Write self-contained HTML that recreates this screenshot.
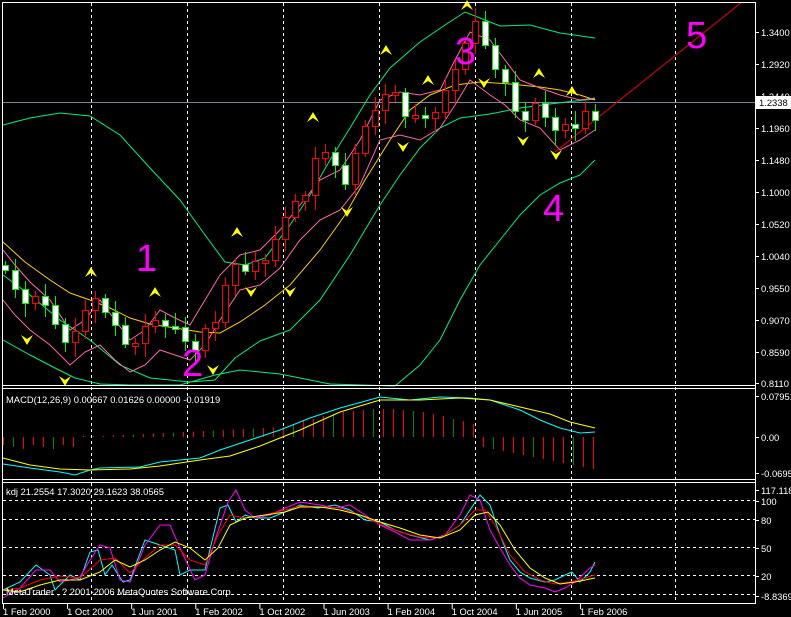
<!DOCTYPE html>
<html><head><meta charset="utf-8"><style>
html,body{margin:0;padding:0;background:#000;width:791px;height:617px;overflow:hidden}
svg{display:block}
text{font-family:"Liberation Sans",sans-serif;font-size:9.4px;fill:#fff}
.n{font-size:38px;fill:#ff00ff}
</style></head><body>
<svg id="s" width="791" height="617" xmlns="http://www.w3.org/2000/svg">
<rect width="791" height="617" fill="#000"/>
<g id="grid" stroke="#fff" stroke-dasharray="3,3" stroke-width="1">
<line x1="91.5" y1="3" x2="91.5" y2="603"/><line x1="187.5" y1="3" x2="187.5" y2="603"/>
<line x1="283.5" y1="3" x2="283.5" y2="603"/><line x1="379.5" y1="3" x2="379.5" y2="603"/>
<line x1="475.5" y1="3" x2="475.5" y2="603"/><line x1="571.5" y1="3" x2="571.5" y2="603"/>
<line x1="675.5" y1="3" x2="675.5" y2="603"/>
<line x1="3" y1="500.5" x2="755" y2="500.5"/><line x1="3" y1="519.5" x2="755" y2="519.5"/>
<line x1="3" y1="547.5" x2="755" y2="547.5"/><line x1="3" y1="575.5" x2="755" y2="575.5"/>
<line x1="3" y1="594.5" x2="755" y2="594.5"/>
</g>
<line x1="3" y1="102.5" x2="755" y2="102.5" stroke="#778899"/>
<g fill="none" stroke-width="1">
<polyline stroke="#00ee77" points="3,125 30,118 60,113 90,116 120,135 150,168 180,200 205,235 225,262 245,265 265,258 290,225 310,195 330,160 350,128 370,95 390,68 420,42 445,25 465,12 480,18 500,26 530,25 560,33 595,38"/>
<polyline stroke="#00ee77" points="3,340 30,355 55,368 75,378 100,384 130,385 180,385 215,375 240,370 280,374 330,384 395,386 420,365 440,340 460,300 480,265 500,240 520,215 540,195 560,183 580,175 595,160"/>
<polyline stroke="#00ee77" points="3,275 30,295 60,320 90,340 120,365 150,378 190,382 215,380 235,358 260,341 290,330 320,300 350,255 380,205 400,175 420,148 440,128 460,118 490,114 520,108 550,104 575,101 595,99"/>
<polyline stroke="#ffcc00" points="3,242 25,262 50,280 70,293 90,300 110,308 130,318 150,324 175,328 200,332 220,333 240,322 265,305 290,285 320,250 345,215 365,180 390,140 410,110 430,95 455,85 480,82 510,84 540,87 560,90 580,95 595,100"/>
<polyline stroke="#ff66aa" points="3,250 15,265 30,282 50,300 70,330 85,320 100,300 115,320 130,340 145,330 160,310 175,318 190,325 205,300 220,275 240,255 260,250 280,230 300,205 320,180 340,170 360,140 380,100 400,92 420,95 440,90 455,60 470,32 490,40 505,60 520,80 540,88 560,95 580,100 595,98"/>
<polyline stroke="#ff66aa" points="3,300 15,315 30,330 50,345 70,365 85,352 100,345 115,360 130,372 145,365 160,350 175,355 190,360 205,345 220,320 240,290 260,285 280,268 300,240 320,220 340,210 360,185 380,140 400,135 420,140 440,128 455,105 470,80 490,95 505,105 520,120 540,128 560,150 580,140 595,130"/>
<polyline stroke="#ee0000" points="555,152 742,2"/>
</g>
<g id="c"></g>
<g id="arr" fill="#ffff00"></g>
<g stroke="#fff" stroke-width="1" fill="none">
<line x1="2.5" y1="2" x2="2.5" y2="604"/>
<line x1="755.5" y1="2" x2="755.5" y2="604"/>
<line x1="2" y1="2.5" x2="756" y2="2.5"/>
<line x1="2" y1="385.5" x2="756" y2="385.5"/><line x1="2" y1="388.5" x2="756" y2="388.5"/>
<line x1="2" y1="479.5" x2="756" y2="479.5"/><line x1="2" y1="482.5" x2="756" y2="482.5"/>
<line x1="2" y1="603.5" x2="756" y2="603.5"/>
</g>
<g id="h" stroke-width="1"></g>
<g fill="none" stroke-width="1">
<polyline stroke="#00ffff" points="3,464 30,468 60,472 75,475 90,470 100,468 140,467 160,462 200,458 220,450 250,440 280,430 310,418 340,408 380,397 410,400 440,397 470,398 490,400 520,410 540,420 560,428 580,433 595,432"/>
<polyline stroke="#ffff00" points="3,458 30,465 60,469 90,470 130,469 160,466 200,460 230,456 260,446 300,430 340,412 380,400 420,400 460,398 490,400 520,407 550,414 570,422 595,428"/>
<polyline stroke="#00ffff" points="3,590 20,582 36,565 50,575 55,590 70,575 80,580 90,552 98,550 105,575 112,565 123,582 130,580 145,540 160,545 175,550 180,575 190,570 205,570 220,508 228,505 236,522 245,515 255,518 270,518 285,512 300,505 318,508 335,505 350,510 365,520 380,522 395,530 410,535 430,540 445,535 460,525 470,510 480,495 490,505 500,535 510,560 520,572 530,578 545,582 555,580 565,575 572,572 580,582 590,572 595,562"/>
<polyline stroke="#ff00ff" points="3,598 20,588 36,570 50,570 60,582 70,580 80,577 90,560 100,545 110,548 120,580 130,582 145,545 160,525 170,525 180,548 195,580 205,575 215,540 228,502 236,490 245,510 255,518 270,515 285,508 300,502 320,505 335,508 350,505 365,515 380,525 395,532 410,540 430,540 445,535 460,515 470,495 480,500 490,530 500,548 510,565 520,578 530,585 545,588 555,592 565,588 575,582 590,568 595,565"/>
<polyline stroke="#ff0000" points="3,590 20,588 40,580 60,576 80,578 100,560 115,558 130,573 145,558 160,545 175,545 190,560 205,565 218,535 230,515 245,518 265,515 285,510 300,506 320,507 340,508 360,515 380,524 400,532 420,537 440,538 460,525 475,510 485,510 495,525 510,555 525,572 540,580 555,584 570,582 585,578 595,575"/>
<polyline stroke="#ffff00" points="3,590 20,592 40,585 60,580 80,580 100,572 115,560 130,567 145,560 160,550 175,542 190,548 205,560 218,548 230,525 245,518 265,515 285,512 300,507 320,507 340,510 360,515 380,522 400,528 420,535 440,538 460,530 475,515 488,512 500,525 515,550 530,568 545,578 560,584 575,582 595,578"/>
</g>
<rect x="756" y="96" width="35" height="13" fill="#fff"/>
<text x="759" y="106" style="fill:#000">1.2338</text>
<g id="ax"></g>
<text x="6" y="403">MACD(12,26,9) 0.00667 0.01626 0.00000 -0.01919</text>
<text x="6" y="495">kdj 21.2554 17.3020 29.1623 38.0565</text>
<text x="6" y="595">MetaTrader , ? 2001-2006 MetaQuotes Software Corp.</text>
<text class="n" x="136" y="271">1</text>
<text class="n" x="182" y="376">2</text>
<text class="n" x="455" y="64">3</text>
<text class="n" x="543" y="221">4</text>
<text class="n" x="686" y="48">5</text>
</svg>
<script>
(function(){
var NS="http://www.w3.org/2000/svg";
function el(p,t,a){var e=document.createElementNS(NS,t);for(var k in a)e.setAttribute(k,a[k]);p.appendChild(e);return e;}
var ys=[275,290,300,300,305,320,345,330,305,300,310,330,345,340,330,320,322,330,340,345,330,320,290,265,268,265,260,235,220,200,190,160,150,170,185,150,130,110,90,95,115,110,120,110,95,70,40,25,45,65,85,110,115,105,115,135,125,125,115,120];
var g=document.getElementById("c");
var prev=265;
for(var i=0;i<ys.length;i++){
 var x=5+i*10, o=prev, c=ys[i]+((i*37)%11-5);
 var t0=Math.min(o,c), b0=Math.max(o,c); if(b0-t0<3){b0=t0+3;}
 var up=c<o; var col=up?"#ff0000":"#00ee00";
 el(g,"line",{x1:x+0.5,y1:t0-4-(i*7)%10,x2:x+0.5,y2:b0+4+(i*5)%12,stroke:col});
 el(g,"rect",{x:x-2.5,y:t0+0.5,width:6,height:b0-t0,fill:up?"#000":"#fff",stroke:col});
 prev=c;
}
var a=document.getElementById("arr");
[[91,272,1],[155,292,1],[237,232,1],[313,117,1],[386,50,1],[428,80,1],[467,5,1],[539,73,1],[572,91,1],[27,340,0],[65,381,0],[213,370,0],[251,292,0],[290,292,0],[347,212,0],[403,147,0],[484,83,0],[523,141,0],[556,155,0]].forEach(function(p){
 if(p[2]) el(a,"path",{d:"M"+(p[0]-6)+","+(p[1]+5)+" L"+p[0]+","+(p[1]-5)+" L"+(p[0]+6)+","+(p[1]+5)+" L"+p[0]+","+(p[1]+1)+"Z"});
 else el(a,"path",{d:"M"+(p[0]-6)+","+(p[1]-5)+" L"+p[0]+","+(p[1]+5)+" L"+(p[0]+6)+","+(p[1]-5)+" L"+p[0]+","+(p[1]-1)+"Z"});
});
var h=document.getElementById("h");
for(var i=0;i<60;i++){
 var x=3+i*10; if(x>595)break;
 var y1,y2;
 if(i<8){y1=437;y2=437+8+(i%3)*2;}
 else if(i<28){y1=437-Math.max(1,(i-8)*0.5);y2=437;}
 else if(i<48){var v=Math.round(10+18*Math.sin((i-28)/20*Math.PI));y1=437-v;y2=437;}
 else {y1=437;y2=437+10+(i-48)*2;}
 var col=(i%4==1)?"#008800":"#ff0000";
 el(h,"line",{x1:x+0.5,y1:y1,x2:x+0.5,y2:y2,stroke:col});
}
var ax=document.getElementById("ax");
[["1.3400",32],["1.2920",64],["1.2440",96],["1.1960",128],["1.1480",160],["1.1000",192],["1.0520",224],["1.0040",256],["0.9550",288],["0.9070",320],["0.8590",352],["0.8110",383],["0.07951",396],["0.00",437],["-0.0695",473],["117.118",490],["100",501],["80",520],["50",548],["20",576],["-8.8369",596]].forEach(function(p){
 el(ax,"line",{x1:755,y1:p[1]+0.5,x2:759,y2:p[1]+0.5,stroke:"#fff"});
 var t=el(ax,"text",{x:761,y:p[1]+4});t.textContent=p[0];
});
["1 Feb 2000","1 Oct 2000","1 Jun 2001","1 Feb 2002","1 Oct 2002","1 Jun 2003","1 Feb 2004","1 Oct 2004","1 Jun 2005","1 Feb 2006"].forEach(function(s,i){
 var x=3+i*64.1;
 el(ax,"line",{x1:x+0.5,y1:604,x2:x+0.5,y2:609,stroke:"#fff"});
 var t=el(ax,"text",{x:x,y:615});t.textContent=s;
});
})();
</script>
</body></html>
